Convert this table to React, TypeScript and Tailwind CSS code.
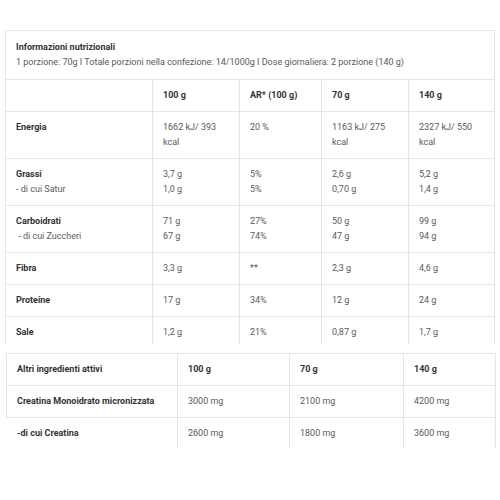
import React from 'react';

type Row = { label: string[]; vals: string[][] };

const rows: Row[] = [
  { label: ['Energia'], vals: [['1662 kJ/ 393', 'kcal'], ['20 %'], ['1163 kJ/ 275', 'kcal'], ['2327 kJ/ 550', 'kcal']] },
  { label: ['Grassi', '- di cui Satur'], vals: [['3,7 g', '1,0 g'], ['5%', '5%'], ['2,6 g', '0,70 g'], ['5,2 g', '1,4 g']] },
  { label: ['Carboidrati', ' - di cui Zuccheri'], vals: [['71 g', '67 g'], ['27%', '74%'], ['50 g', '47 g'], ['99 g', '94 g']] },
  { label: ['Fibra'], vals: [['3,3 g'], ['**'], ['2,3 g'], ['4,6 g']] },
  { label: ['Proteine'], vals: [['17 g'], ['34%'], ['12 g'], ['24 g']] },
  { label: ['Sale'], vals: [['1,2 g'], ['21%'], ['0,87 g'], ['1,7 g']] },
];

const extra = [
  ['Altri ingredienti attivi', '100 g', '70 g', '140 g'],
  ['Creatina Monoidrato micronizzata', '3000 mg', '2100 mg', '4200 mg'],
  ['-di cui Creatina', '2600 mg', '1800 mg', '3600 mg'],
];

const cell = 'pl-[10px] pr-[6px] py-[8px]';

export default function App() {
  return (
    <div className="w-[500px] h-[500px] bg-white overflow-hidden text-[9px] leading-[15px] text-[#5a5a5a]" style={{ fontFamily: 'Roboto, "Liberation Sans", sans-serif' }}>
      {/* nutrition table, cut off at the bottom */}
      <div className="mt-[30px] ml-[5px] h-[315px] overflow-hidden">
        <div className="w-[490px] border border-[#e6e6e6]">
          <div className="px-[10px] py-[9px] border-b border-[#e6e6e6]">
            <div className="font-bold text-[#333]">Informazioni nutrizionali</div>
            <div>1 porzione: 70g I Totale porzioni nella confezione: 14/1000g I Dose giornaliera: 2 porzione (140 g)</div>
          </div>
          <div className="grid grid-cols-[146px_87px_82px_87px_86px] border-b border-[#e6e6e6] font-bold text-[#333]">
            <div className={cell}>&nbsp;</div>
            <div className={`${cell} border-l border-[#e6e6e6]`}>100 g</div>
            <div className={`${cell} border-l border-[#e6e6e6]`}>AR* (100 g)</div>
            <div className={`${cell} border-l border-[#e6e6e6]`}>70 g</div>
            <div className={`${cell} border-l border-[#e6e6e6]`}>140 g</div>
          </div>
          {rows.map((r, i) => (
            <div key={i} className="grid grid-cols-[146px_87px_82px_87px_86px] border-b border-[#e6e6e6]">
              <div className={cell}>
                {r.label.map((l, j) => (
                  <div key={j} className={j === 0 ? 'font-bold text-[#333]' : 'whitespace-pre'}>{l}</div>
                ))}
              </div>
              {r.vals.map((v, k) => (
                <div key={k} className={`${cell} border-l border-[#e6e6e6]`}>
                  {v.map((t, j) => <div key={j}>{t}</div>)}
                </div>
              ))}
            </div>
          ))}
        </div>
      </div>

      {/* active ingredients */}
      <div className="mt-[8px] ml-[6px] w-[490px] border-t border-r border-[#e6e6e6]">
        {extra.map((r, i) => (
          <div
            key={i}
            className={`grid grid-cols-[170px_112px_114px_93px] ${i < 2 ? 'border-b border-l' : 'border-l border-l-transparent'} border-[#e6e6e6]`}
          >
            <div className={`${cell} font-bold text-[#333]`}>{r[0]}</div>
            {r.slice(1).map((t, k) => (
              <div key={k} className={`${cell} border-l border-[#e6e6e6] ${i === 0 ? 'font-bold text-[#333]' : ''}`}>{t}</div>
            ))}
          </div>
        ))}
      </div>
    </div>
  );
}
